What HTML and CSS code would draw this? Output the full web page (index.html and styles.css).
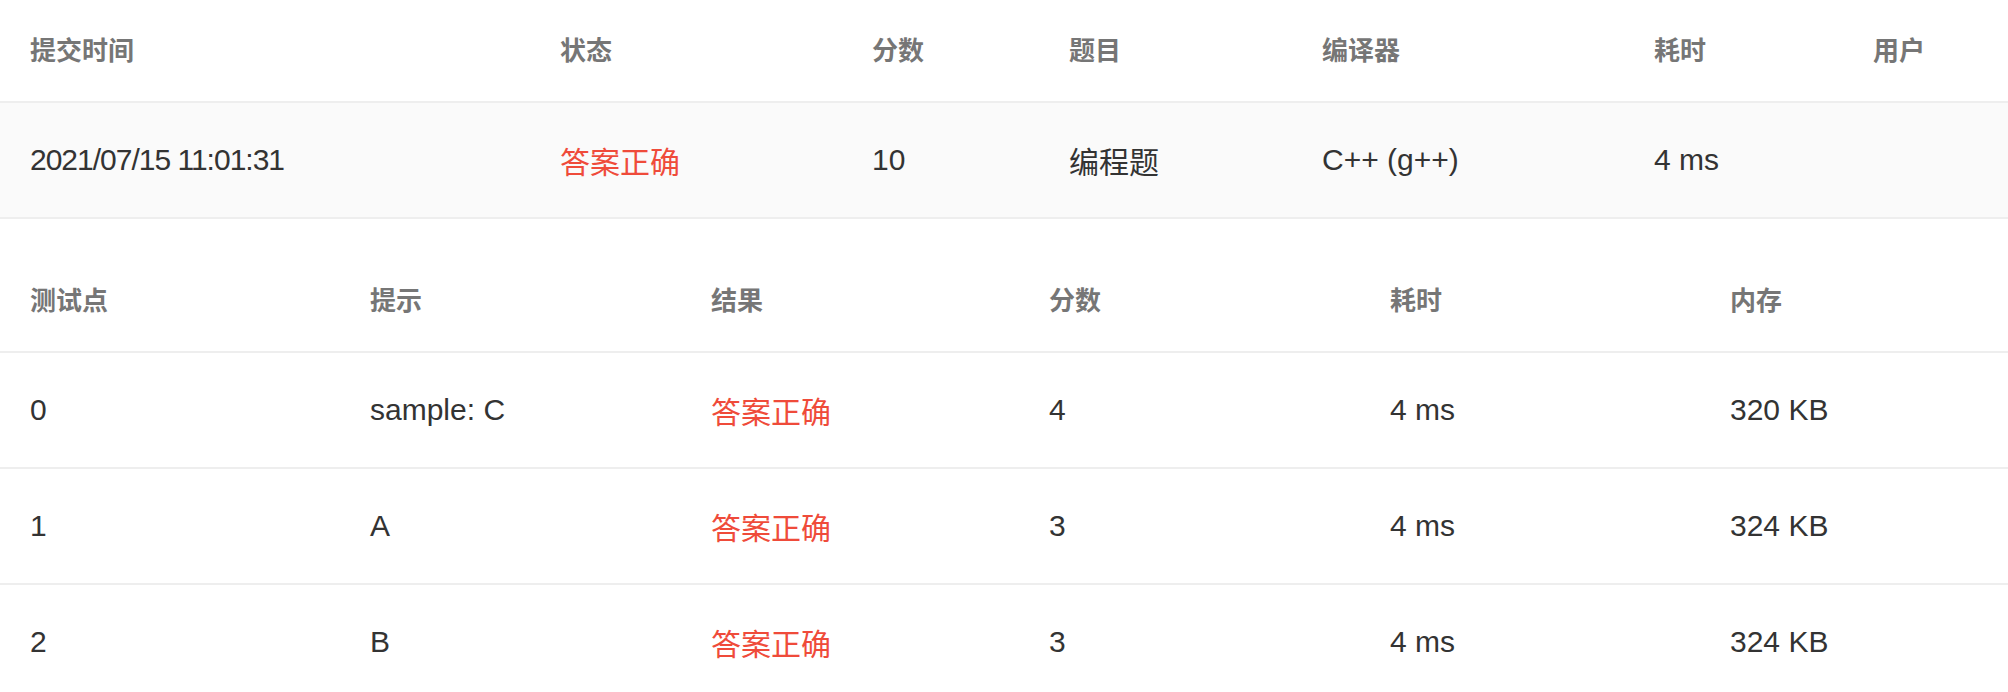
FILE: index.html
```html
<!DOCTYPE html>
<html lang="zh-CN">
<head>
<meta charset="utf-8">
<title>提交详情</title>
<link rel="stylesheet" href="styles.css">
</head>
<body>
<div class="page">
  <div class="table summary">
    <div class="row head">
      <div class="cell">提交时间</div>
      <div class="cell">状态</div>
      <div class="cell">分数</div>
      <div class="cell">题目</div>
      <div class="cell">编译器</div>
      <div class="cell">耗时</div>
      <div class="cell">用户</div>
    </div>
    <div class="row body shaded">
      <div class="cell date">2021/07/15 11:01:31</div>
      <div class="cell ok">答案正确</div>
      <div class="cell">10</div>
      <div class="cell">编程题</div>
      <div class="cell">C++ (g++)</div>
      <div class="cell">4 ms</div>
      <div class="cell"></div>
    </div>
  </div>

  <div class="table cases">
    <div class="row head">
      <div class="cell">测试点</div>
      <div class="cell">提示</div>
      <div class="cell">结果</div>
      <div class="cell">分数</div>
      <div class="cell">耗时</div>
      <div class="cell">内存</div>
    </div>
    <div class="row body">
      <div class="cell">0</div>
      <div class="cell">sample: C</div>
      <div class="cell ok">答案正确</div>
      <div class="cell">4</div>
      <div class="cell">4 ms</div>
      <div class="cell">320 KB</div>
    </div>
    <div class="row body">
      <div class="cell">1</div>
      <div class="cell">A</div>
      <div class="cell ok">答案正确</div>
      <div class="cell">3</div>
      <div class="cell">4 ms</div>
      <div class="cell">324 KB</div>
    </div>
    <div class="row body">
      <div class="cell">2</div>
      <div class="cell">B</div>
      <div class="cell ok">答案正确</div>
      <div class="cell">3</div>
      <div class="cell">4 ms</div>
      <div class="cell">324 KB</div>
    </div>
  </div>
</div>
</body>
</html>
```

FILE: styles.css
```css
html, body {
  margin: 0;
  padding: 0;
  background: #ffffff;
}

body {
  font-family: "Liberation Sans", "Noto Sans CJK SC", sans-serif;
  color: #333333;
  overflow: hidden;
}

.page {
  width: 2008px;
  overflow: hidden;
}

.table {
  display: flex;
  flex-direction: column;
}

.cases {
  margin-top: 31px;
}

.row {
  display: grid;
  align-items: center;
  border-bottom: 2px solid #eeeeee;
}

.summary .row {
  grid-template-columns: 530px 312px 197px 253px 332px 219px 165px;
}

.cases .row {
  grid-template-columns: 340px 341px 338px 341px 340px 308px;
}

.row.head {
  height: 101px;
}

.row.body {
  height: 114px;
}

.row.shaded {
  background: #fafafa;
}

.cell {
  padding-left: 30px;
  white-space: nowrap;
}

.head .cell {
  font-family: "Noto Sans CJK SC", "Liberation Sans", sans-serif;
  font-size: 26px;
  font-weight: 600;
  color: #767676;
  padding-bottom: 4px;
}

.body .cell {
  font-size: 30px;
  color: #333333;
}

.body .cell.date {
  letter-spacing: -1px;
}

.body .cell.ok {
  font-family: "Noto Sans CJK SC", sans-serif;
  color: #ef4b3a;
}
```
